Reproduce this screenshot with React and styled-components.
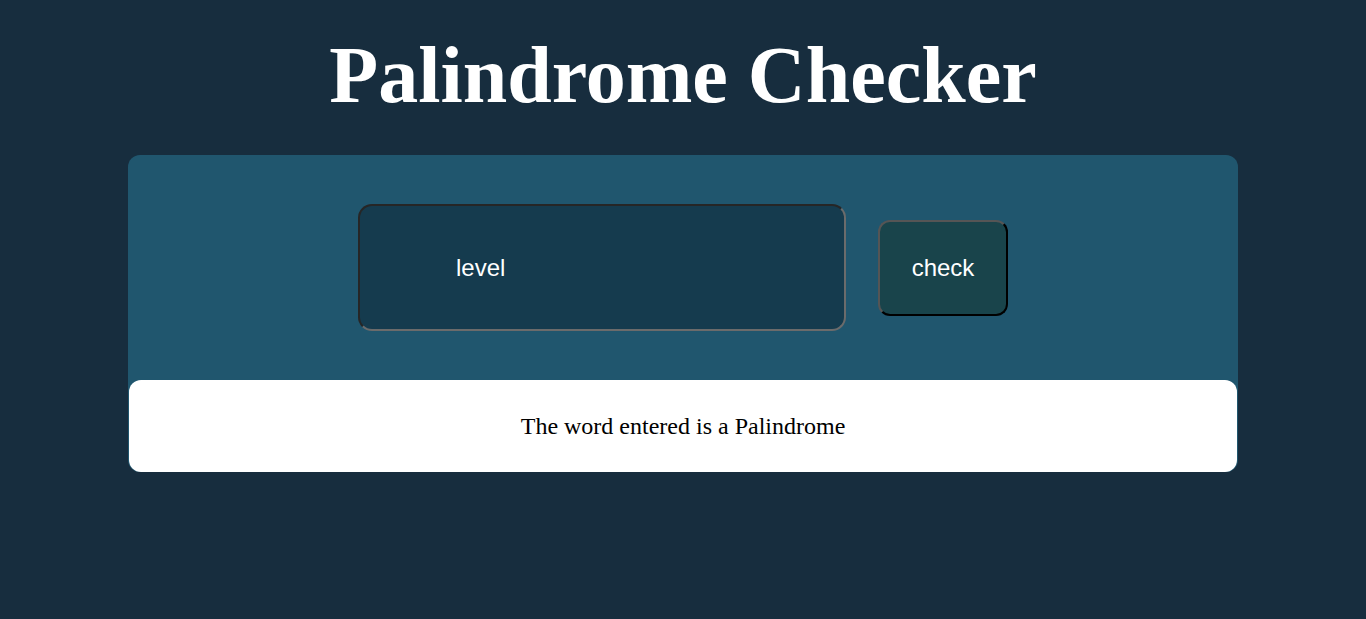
import React, { useState } from "react";
import styled, { createGlobalStyle } from "styled-components";

const GlobalStyle = createGlobalStyle`
  html, body {
    margin: 0;
    padding: 0;
    background-color: #172d3e;
    font-family: "Liberation Serif", "Times New Roman", serif;
  }
`;

const Page = styled.div`
  min-height: 619px;
  display: flex;
  flex-direction: column;
  align-items: center;
`;

const Title = styled.h1`
  margin: 23px 0 28px;
  font-size: 80px;
  font-weight: 700;
  line-height: 1.3;
  color: #ffffff;
  text-align: center;
`;

const Card = styled.div`
  width: 1110px;
  box-sizing: border-box;
  background-color: #20566e;
  border-radius: 12px;
  display: flex;
  flex-direction: column;
`;

const InputRow = styled.div`
  display: flex;
  align-items: center;
  justify-content: center;
  gap: 32px;
  padding: 49px 0;
`;

const WordInput = styled.input`
  width: 488px;
  height: 127px;
  box-sizing: border-box;
  padding: 0 0 0 96px;
  border: 2px solid #6b6b6b;
  border-top-color: #262626;
  border-left-color: #262626;
  border-radius: 14px;
  background-color: #153b4e;
  color: #ffffff;
  font-family: "Liberation Sans", Arial, sans-serif;
  font-size: 24px;
  outline: none;
`;

const CheckButton = styled.button`
  width: 130px;
  height: 96px;
  box-sizing: border-box;
  border: 2px solid #000;
  border-top-color: #555;
  border-left-color: #555;
  border-radius: 12px;
  background-color: #19444b;
  color: #ffffff;
  font-family: "Liberation Sans", Arial, sans-serif;
  font-size: 24px;
  cursor: pointer;
`;

const Result = styled.div`
  margin: 0 1px;
  height: 92px;
  display: flex;
  align-items: center;
  justify-content: center;
  background-color: #ffffff;
  border-radius: 12px;
  color: #000000;
  font-size: 24px;
`;

function App() {
  const [word, setWord] = useState("level");
  const [message, setMessage] = useState("The word entered is a Palindrome");

  const check = () => {
    const clean = word.toLowerCase().replace(/[^a-z0-9]/g, "");
    const isPal = clean.length > 0 && clean === clean.split("").reverse().join("");
    setMessage(isPal ? "The word entered is a Palindrome" : "The word entered is not a Palindrome");
  };

  return (
    <>
      <GlobalStyle />
      <Page>
        <Title>Palindrome Checker</Title>
        <Card>
          <InputRow>
            <WordInput value={word} onChange={(e) => setWord(e.target.value)} />
            <CheckButton onClick={check}>check</CheckButton>
          </InputRow>
          <Result>{message}</Result>
        </Card>
      </Page>
    </>
  );
}

export default App;
